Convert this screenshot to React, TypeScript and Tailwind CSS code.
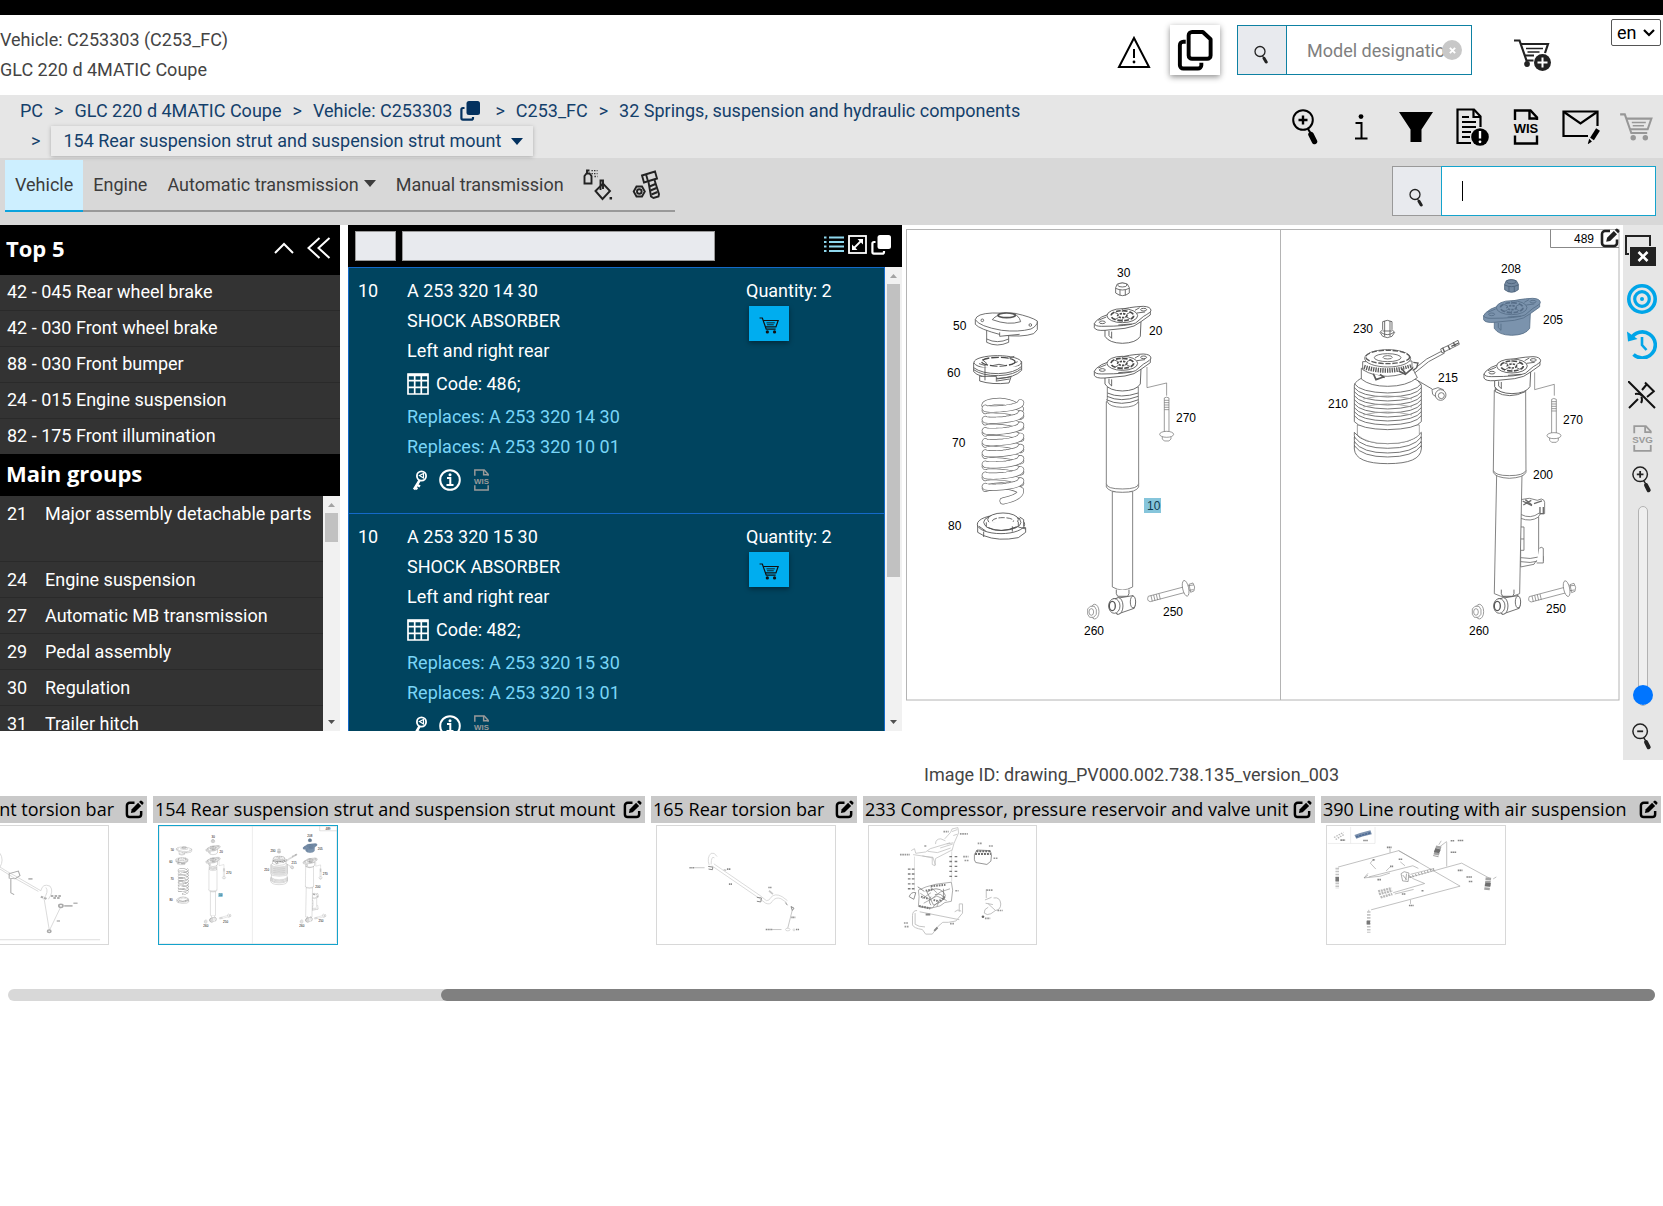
import React from "react";

type IconProps = { className?: string };

const HEADER_TEXT = "font-['Roboto',sans-serif] text-[18px] leading-[30px]";

/* ---------- icons ---------- */

function CartIcon({ className }: IconProps) {
  return (
    <svg viewBox="0 0 36 30" className={className} fill="none" stroke="currentColor" strokeWidth="2.2">
      <path d="M1 1.5h5l7 20h17" />
      <path d="M7.500 6H34.500L30.500 17.500H11.500" />
      <path d="M13.500 10.200h15M14.500 13.700h12" strokeWidth="1.600" />
      <circle cx="15" cy="26.500" r="2.900" fill="currentColor" stroke="none" />
      <circle cx="28" cy="26.500" r="2.900" fill="currentColor" stroke="none" />
    </svg>
  );
}

function CartPlusIcon({ className }: IconProps) {
  return (
    <svg viewBox="0 0 38 32" className={className} fill="none" stroke="#222" strokeWidth="2.200">
      <path d="M0 1.500h5.500l7 20h7" />
      <path d="M6.500 5H34L31 14M11 16.500h9" />
      <path d="M12 9.500h17M13.500 13h12" strokeWidth="1.600" />
      <circle cx="13" cy="25" r="2.900" fill="#222" stroke="none" />
      <circle cx="28.500" cy="23.500" r="8.500" fill="#222" stroke="none" />
      <path d="M28.500 18.500v10M23.500 23.500h10" stroke="#fff" strokeWidth="2" />
    </svg>
  );
}

function MagnifierIcon({ className, sign }: IconProps & { sign?: "plus" | "minus" }) {
  return (
    <svg viewBox="0 0 27 36" className={className} fill="none" stroke="currentColor">
      <circle cx="11" cy="11" r="9.800" strokeWidth="2" />
      {sign && <path d={sign === "plus" ? "M11 6.500v9M6.500 11h9" : "M7 11h8"} strokeWidth="2.400" />}
      <path d="M16 20l2.500 4" strokeWidth="2" />
      <path d="M19 25.500l3.500 7" strokeWidth="5.500" strokeLinecap="round" />
    </svg>
  );
}

function SmallSearchIcon({ className }: IconProps) {
  return (
    <svg viewBox="0 0 14 19" className={className} fill="none" stroke="#222">
      <circle cx="6" cy="6.500" r="5" strokeWidth="1.300" />
      <path d="M8.500 11l1.500 2" strokeWidth="1.200" />
      <path d="M10 13.200l2.200 3.800" strokeWidth="3" strokeLinecap="round" />
    </svg>
  );
}

function CloneIcon({ className }: IconProps) {
  return (
    <svg viewBox="0 0 20 20" className={className}>
      <rect x="6.500" y="0" width="13.500" height="14" rx="2.500" fill="currentColor" />
      <path d="M4.500 7H3a1.600 1.600 0 0 0-1.600 1.600v8.300A1.700 1.700 0 0 0 3 18.600h8.300a1.700 1.700 0 0 0 1.700-1.700v-1" fill="none" stroke="currentColor" strokeWidth="2.200" />
    </svg>
  );
}

function CopyIcon({ className }: IconProps) {
  return (
    <svg viewBox="0 0 36 42" className={className} fill="none" stroke="#000" strokeWidth="4" strokeLinejoin="round">
      <path d="M15 2h11l8 7.500V26a3.500 3.500 0 0 1-3.500 3.500H15A3.500 3.500 0 0 1 11.500 26V5.500A3.500 3.500 0 0 1 15 2z" />
      <path d="M8.500 12H6a3.500 3.500 0 0 0-3.500 3.500V36A3.500 3.500 0 0 0 6 39.500h15a3.500 3.500 0 0 0 3.500-3.500v-2.500" />
    </svg>
  );
}

function EditIcon({ className }: IconProps) {
  return (
    <svg viewBox="0 0 20 20" className={className} fill="none" stroke="currentColor">
      <path d="M10 3H5a3 3 0 0 0-3 3v9a3 3 0 0 0 3 3h9a3 3 0 0 0 3-3v-3.500" strokeWidth="2.600" />
      <path d="M6.200 13.800l.9-4L13.800 3l3.200 3.200-6.800 6.700z" fill="currentColor" stroke="none" />
      <path d="M14.800 2l1-1a1.400 1.400 0 0 1 2 0l1.200 1.200a1.400 1.400 0 0 1 0 2l-1 1z" fill="currentColor" stroke="none" />
    </svg>
  );
}

function WordDocIcon({ className, label }: IconProps & { label: string }) {
  return (
    <svg viewBox="0 0 28 36" className={className} fill="none" stroke="currentColor" strokeWidth="2.400">
      <path d="M3 11V1.500h15.500L25 8.500V11" />
      <path d="M17.500 1.500v8H25" />
      <path d="M3 26.500v8h22v-8" />
      <text x="14" y="24" textAnchor="middle" fill="currentColor" stroke="none" fontFamily="Liberation Sans, sans-serif" fontWeight="700" fontSize="13">
        {label}
      </text>
    </svg>
  );
}

function WarningIcon({ className }: IconProps) {
  return (
    <svg viewBox="0 0 34 34" className={className} fill="none" stroke="#000" strokeWidth="2">
      <path d="M17 3L32 32H2z" />
      <path d="M17 14v9" />
      <circle cx="17" cy="27" r="1.400" fill="#000" stroke="none" />
    </svg>
  );
}

function InfoGlyph({ className }: IconProps) {
  return (
    <svg viewBox="0 0 14 26" className={className} fill="none" stroke="currentColor" strokeWidth="2">
      <circle cx="7" cy="2.600" r="2.400" fill="currentColor" stroke="none" />
      <path d="M1.500 9H7.500V24M1 24.500h12.500" />
    </svg>
  );
}

function FunnelIcon({ className }: IconProps) {
  return (
    <svg viewBox="0 0 34 30" className={className}>
      <path d="M0 0h34L22.500 17.500V30h-11V17.500z" fill="#000" />
    </svg>
  );
}

function NoteAlertIcon({ className }: IconProps) {
  return (
    <svg viewBox="0 0 34 38" className={className} fill="none" stroke="#000" strokeWidth="2.200">
      <path d="M15 35H1.500V1.500H18L24.500 8.500V19" />
      <path d="M17.500 1.500V9h7" />
      <path d="M6 9h7M6 14h14M6 19h14M6 24h9M6 29h8" strokeWidth="2" />
      <circle cx="24" cy="29" r="8.800" fill="#000" stroke="none" />
      <path d="M24 23v7.500" stroke="#fff" strokeWidth="2.400" />
      <circle cx="24" cy="33.800" r="1.400" fill="#fff" stroke="none" />
    </svg>
  );
}

function MailPenIcon({ className }: IconProps) {
  return (
    <svg viewBox="0 0 38 34" className={className} fill="none" stroke="#000" strokeWidth="2.200">
      <path d="M26 26H1.500V1.500H35.500V16" />
      <path d="M2 2l16.500 11.500L35 2" />
      <path d="M36 19.500l-6 9.500" strokeWidth="4.500" />
      <path d="M27.500 30l-.8 3 2.300-1.500z" strokeWidth="1.200" fill="#000" />
    </svg>
  );
}

function PaintIcon({ className }: IconProps) {
  return (
    <svg viewBox="0 0 30 32" className={className} fill="none" stroke="#222" strokeWidth="1.900">
      <path d="M1.500 14.500V7l2-2.500h3L8.500 7v7.500z" />
      <path d="M4 4V1.500h2.500" />
      <path d="M8.500 1.700h6M8.500 4.600h6M11.500 7.500h3" strokeDasharray="1.300 1.300" strokeWidth="1.300" />
      <path d="M12.500 22l7.500-7.500 7 7.500-7.500 8z" />
      <path d="M17.500 21V11.500H20V20" />
      <path d="M27.800 28v2.500" strokeWidth="2.500" />
    </svg>
  );
}

function BoltIcon({ className }: IconProps) {
  return (
    <svg viewBox="0 0 28 30" className={className} fill="none" stroke="#222" strokeWidth="1.900">
      <path d="M10 5.500L23 1.500l2 7L12 12.500z" />
      <path d="M14 4.300l2 7" />
      <path d="M16.500 12l2.500 14.500 2.500 1.500 5-1.500.5-2.500-4.500-14" />
      <path d="M17.500 16.500l6-2.500M18.500 20.500l6-2.500M19.500 24.500l6-2.500" />
      <path d="M4.500 16.500h5.500l2.800 5-2.800 5H4.500l-2.800-5z" />
      <circle cx="7.300" cy="21.500" r="2.300" />
    </svg>
  );
}

function CaretDown({ className }: IconProps) {
  return (
    <svg viewBox="0 0 12 7" className={className}>
      <path d="M0 0h12L6 7z" fill="currentColor" />
    </svg>
  );
}

function ListIcon({ className }: IconProps) {
  return (
    <svg viewBox="0 0 20 17" className={className} fill="none" stroke="#8fd8ee" strokeWidth="1.800">
      <path d="M5 1.500h15M5 6h15M5 10.500h15M5 15h15" />
      <path d="M0 1.500h2.500M0 6h2.500M0 10.500h2.500M0 15h2.500" />
    </svg>
  );
}

function ExpandIcon({ className }: IconProps) {
  return (
    <svg viewBox="0 0 19 19" className={className} fill="none" stroke="#fff" strokeWidth="1.800">
      <rect x="1" y="1" width="17" height="17" />
      <path d="M5.500 13.500l8-8" />
      <path d="M4 9.500V15h5.500zM9.500 4H15v5.500z" fill="#fff" stroke="none" />
    </svg>
  );
}

function GridIcon({ className }: IconProps) {
  return (
    <svg viewBox="0 0 22 22" className={className} fill="none" stroke="#fff" strokeWidth="1.700">
      <path d="M1 1h20v20H1zM1 7.700h20M1 14.300h20M7.700 1v20M14.300 1v20" />
      <path d="M1 2h20" strokeWidth="2.500" />
    </svg>
  );
}

function KeyIcon({ className }: IconProps) {
  return (
    <svg viewBox="0 0 16 21" className={className} fill="none" stroke="#fff">
      <circle cx="9.500" cy="6" r="4.600" strokeWidth="1.800" />
      <path d="M7.500 5.500l4-2v4.500z" strokeWidth="1.200" />
      <path d="M7.500 10.500L2 19.500M5.500 15l2.500 1.500M3 17.500l2.500 1.500" strokeWidth="2.500" />
    </svg>
  );
}

function InfoCircleIcon({ className }: IconProps) {
  return (
    <svg viewBox="0 0 22 22" className={className} fill="none" stroke="#fff" strokeWidth="2">
      <circle cx="11" cy="11" r="9.800" />
      <path d="M8 9h3.300v6.800M7.500 16h7" />
      <circle cx="11" cy="5.800" r="1.500" fill="#fff" stroke="none" />
    </svg>
  );
}

function ChevronUpIcon({ className }: IconProps) {
  return (
    <svg viewBox="0 0 20 12" className={className} fill="none" stroke="#fff" strokeWidth="2">
      <path d="M1 11l9-9 9 9" />
    </svg>
  );
}

function DoubleLeftIcon({ className }: IconProps) {
  return (
    <svg viewBox="0 0 24 22" className={className} fill="none" stroke="#fff" strokeWidth="2">
      <path d="M12.500 1l-11 10 11 10M22.500 1l-11 10 11 10" />
    </svg>
  );
}

function CloseWindowIcon({ className }: IconProps) {
  return (
    <svg viewBox="0 0 31 31" className={className} fill="none" stroke="#222" strokeWidth="2">
      <path d="M4 19H1V1h24v10" />
      <rect x="5" y="12" width="26" height="19" fill="#222" stroke="none" />
      <path d="M13.500 17l9 9M22.500 17l-9 9" stroke="#fff" strokeWidth="2.600" />
    </svg>
  );
}

function TargetIcon({ className }: IconProps) {
  return (
    <svg viewBox="0 0 30 30" className={className} fill="none" stroke="#00a5e8">
      <circle cx="15" cy="15" r="13.200" strokeWidth="3.600" />
      <circle cx="15" cy="15" r="7.300" strokeWidth="3.200" />
      <circle cx="15" cy="15" r="2" fill="#00a5e8" stroke="none" />
    </svg>
  );
}

function HistoryIcon({ className }: IconProps) {
  return (
    <svg viewBox="0 0 30 30" className={className} fill="none" stroke="#00a5e8">
      <path d="M4 9.500A13 13 0 1 1 6.500 25.500" strokeWidth="3.600" />
      <path d="M0 2.500L1 12.500 10.500 10z" fill="#00a5e8" stroke="none" />
      <path d="M15 8v8l4.500 5" strokeWidth="2.600" />
    </svg>
  );
}

function UnpinIcon({ className }: IconProps) {
  return (
    <svg viewBox="0 0 28 28" className={className} fill="none" stroke="#111" strokeWidth="2">
      <path d="M0 0l27 27" />
      <path d="M1 27l9-9M7 13c3-.5 5 0 7 1.500M13 22c1.500-2 1.200-4 .5-6.500M14 9l5-6M19 16l6-5M17 1.500l9.500 9.500" />
    </svg>
  );
}

/* ---------- exploded view ---------- */

const LINE = "#6b6b6b";

function Mount({ fill = "#fff", stroke = "#4a4a4a" }: { fill?: string; stroke?: string }) {
  return (
    <g fill={fill} stroke={stroke} strokeWidth="2.500">
      <path d="M600 300V334Q612 354 652 355Q694 354 706 334L708 290z" />
      <path d="M568 296V308Q572 318 600 316L660 310Q690 306 708 290L736 270V256Z" />
      <path d="M568 296Q570 288 590 276L640 256Q670 246 715 244Q737 245 738 256Q738 262 716 274L692 294Q670 304 590 304Q570 304 568 296z" />
      <ellipse cx="652" cy="272" rx="46" ry="21" />
      <ellipse cx="652" cy="272" rx="34" ry="15" strokeWidth="5" strokeDasharray="14 6" />
      <ellipse cx="652" cy="272" rx="14" ry="6" strokeWidth="5" strokeDasharray="7 3" />
      <path d="M628 262l12 5M676 262l-10 5M630 284l10-6M676 282l-10-5M652 252v9M652 282v9" />
      <ellipse cx="592" cy="292" rx="9" ry="4" />
      <ellipse cx="716" cy="254" rx="9" ry="4" />
      <path d="M612 318v14l8 8v-20M696 264l24-3M640 300l40-3M580 286l24-10M690 256l14-8" />
    </g>
  );
}

function Nut({ fill = "#fff", stroke = "#555" }: { fill?: string; stroke?: string }) {
  return (
    <g fill={fill} stroke={stroke} strokeWidth="2.500">
      <path d="M632 188l5-11q15-6 30 0l6 11v16q-20 16-41 0z" />
      <ellipse cx="652" cy="180" rx="14" ry="6" />
      <path d="M632 190q20 10 41 0M645 194v17M661 194v17" />
    </g>
  );
}

function LongBolt() {
  return (
    <g fill="#fff" stroke={LINE} strokeWidth="2">
      <path d="M778 519q6-5 14 0V622h-14z" />
      <path d="M778 526h14M778 533h14M778 540h14M778 547h14M778 554h14" />
      <path d="M772 634v8l6 6h14l6-6v-8z" />
      <ellipse cx="785" cy="628" rx="21" ry="9" />
    </g>
  );
}

function SideBolt() {
  return (
    <g fill="#fff" stroke={LINE} strokeWidth="2">
      <path d="M730 1114L836 1086 842 1102 736 1130Q724 1128 730 1114z" />
      <path d="M738 1112l4 17M746 1110l4 17M754 1108l4 17M762 1106l4 17" />
      <path d="M852 1078l12-4 5 12-2 12-10 4z" />
      <ellipse cx="842" cy="1090" rx="9" ry="24" transform="rotate(-12 842 1090)" />
      <path d="M850 1082l16-2M852 1096l14-2" />
    </g>
  );
}

function FlangeNut() {
  return (
    <g fill="#fff" stroke={LINE} strokeWidth="2">
      <ellipse cx="569" cy="1160" rx="13" ry="22" />
      <path d="M548 1152l8-8h12l6 10v14l-8 9h-12l-6-9z" />
      <ellipse cx="559" cy="1161" rx="7" ry="10" />
    </g>
  );
}

function LowerEye() {
  return (
    <g fill="#fff" stroke="#555" strokeWidth="2.500">
      <path d="M634 1094v12l4 8h30l4-8v-12" />
      <path d="M624 1122L684 1112Q696 1128 688 1150L636 1168z" />
      <ellipse cx="684" cy="1131" rx="8" ry="18" />
      <ellipse cx="640" cy="1143" rx="14" ry="25" />
      <ellipse cx="628" cy="1143" rx="17" ry="22" />
      <ellipse cx="622" cy="1143" rx="9" ry="14" strokeWidth="4" />
    </g>
  );
}

const COIL_TOP = 540;
const COIL_PITCH = 33.500;

function coilHalf(index: number, front: boolean) {
  const start = front ? 0 : Math.PI;
  const points: string[] = [];
  for (let step = 0; step <= 16; step++) {
    const t = start + (Math.PI * step) / 16;
    const x = 294 + 53 * Math.cos(t);
    const y = COIL_TOP + COIL_PITCH * (index + t / (2 * Math.PI)) + 9 * Math.sin(t);
    points.push(`${x.toFixed(1)} ${y.toFixed(1)}`);
  }
  return "M" + points.join("L");
}

function Tube({ d }: { d: string }) {
  return (
    <g fill="none" strokeLinecap="round">
      <path d={d} stroke={LINE} strokeWidth="21" />
      <path d={d} stroke="#fff" strokeWidth="17" />
    </g>
  );
}

function Spring() {
  const turns = [0, 1, 2, 3, 4, 5, 6, 7];
  return (
    <g>
      <Tube d="M240 540Q244 530 285 529Q320 530 346 552" />
      {turns.slice(0, 7).map((i) => (
        <Tube key={i} d={coilHalf(i, false)} />
      ))}
      <Tube d="M241 790Q300 772 346 796Q350 816 294 828" />
      {turns.slice(0, 8).map((i) => (
        <Tube key={i} d={coilHalf(i - 0.2, true)} />
      ))}
    </g>
  );
}

function LeftStrut() {
  return (
    <g>
      <g fill="#fff" stroke="#555" strokeWidth="2.500">
        <path d="M245 300V352Q276 368 311 352V318z" />
        <path d="M211 284V298Q222 312 290 330Q350 338 386 326L397 314V290z" />
        <path d="M211 284Q214 266 262 264L330 265Q380 276 397 288Q398 302 378 312Q340 322 290 316Q222 304 211 284z" />
        <path d="M262 284Q270 272 300 264L334 270Q346 280 347 290Q310 302 262 284z" />
        <ellipse cx="305" cy="271" rx="26" ry="7" strokeWidth="5" />
        <path d="M245 342q32 16 66 0M284 322v12l60-6" />
        <circle cx="376" cy="300" r="4" />
        <circle cx="232" cy="286" r="4" />
      </g>
      <g fill="#fff" stroke="#4a4a4a" strokeWidth="2.500">
        <path d="M224 450V468Q260 480 312 474L320 450z" />
        <path d="M206 414V440Q220 458 280 460Q330 458 350 436V410z" />
        <ellipse cx="278" cy="412" rx="71" ry="20" />
        <ellipse cx="280" cy="410" rx="50" ry="13" strokeWidth="4" strokeDasharray="22 6" />
        <path d="M206 428Q230 446 280 446Q330 444 350 424M206 434Q230 452 280 452Q330 450 350 430M240 424v42M226 454h48v16M276 462l40-6M276 468l38-6" />
        <path d="M232 404l14 12M310 400l18-6M262 422q20-8 40 0M222 416l20 6M320 418l18-8" />
      </g>
      <Spring />
      <g fill="#fff" stroke="#4a4a4a" strokeWidth="2.500">
        <path d="M218 896V922L236 932Q280 950 340 938L362 922V908z" />
        <ellipse cx="288" cy="898" rx="71" ry="28" />
        <ellipse cx="292" cy="892" rx="56" ry="24" />
        <ellipse cx="294" cy="884" rx="46" ry="20" />
        <ellipse cx="294" cy="888" rx="32" ry="10" strokeDasharray="18 5" />
        <path d="M244 892v14q40 22 96-2v-14M250 908q40 18 84-2M236 920v16M322 904v16M344 876l12 8v20M222 904l20 14M340 906l22 6" />
      </g>
      <Nut />
      <Mount />
      <g fill="#fff" stroke={LINE} strokeWidth="2.500">
        <path d="M622 800H683V1086Q652 1104 622 1086z" />
        <path d="M604 530V786Q612 802 652 802Q694 802 701 786V530z" />
        <path d="M604 776q0 16 48 16t49-16" />
        <path d="M607 486V530Q612 546 652 547Q694 546 700 530V486z" />
        <path d="M607 504q40 18 93 0M606 514q42 20 94 0M604 524q44 22 97 0" strokeWidth="3" />
      </g>
      <g transform="translate(0 143)">
        <Mount />
      </g>
      <path d="M726 426V488L785 474V512" fill="none" stroke={LINE} strokeWidth="2" />
      <LongBolt />
      <LowerEye />
      <SideBolt />
      <FlangeNut />
    </g>
  );
}

function AirSpring() {
  const upper = [476, 488, 500, 512, 524, 536, 548, 560, 572];
  const lower = [632, 646, 660, 672];
  return (
    <g fill="#fff" stroke="#5a5a5a" strokeWidth="2.500">
      <path d="M234 590V640H414V590z" />
      {lower.map((y) => (
        <path key={y} d={`M223 ${y}Q226 ${y + 44} 323 ${y + 44}Q421 ${y + 44} 424 ${y}V${y - 10}Q400 ${y + 24} 323 ${y + 24}Q246 ${y + 24} 223 ${y - 10}z`} />
      ))}
      <path d="M232 600V630Q260 656 323 656Q388 656 418 630V600z" strokeWidth="1.500" />
      <path d="M223 480V590Q240 612 323 614Q408 612 424 590V480Q416 464 396 458H250Q230 464 223 480z" />
      {upper.map((y) => (
        <path key={y} d={`M223 ${y}Q240 ${y + 26} 323 ${y + 28}Q408 ${y + 26} 424 ${y}`} fill="none" />
      ))}
      <path d="M250 522q70-18 146 0M250 546q70-18 146 0M250 570q70-18 146 0" stroke="#999" fill="none" />
      <path d="M244 430V462Q270 484 323 484Q380 484 412 458L398 430z" />
      <path d="M248 410V434Q280 454 323 454Q370 452 396 432V408z" />
      <path d="M252 426Q320 448 394 424" strokeWidth="14" strokeDasharray="4 3" fill="none" />
      <path d="M280 446l8 18 22-8M300 448l14 10M356 438l20 10 26-22M364 430l12 14" strokeWidth="5" />
      <ellipse cx="323" cy="400" rx="69" ry="26" />
      <ellipse cx="323" cy="396" rx="66" ry="20" strokeDasharray="16 5" strokeWidth="4" />
      <ellipse cx="323" cy="398" rx="40" ry="12" />
      <ellipse cx="323" cy="397" rx="14" ry="5" />
      <path d="M398 436L440 402 490 376M404 444L446 410 494 384" fill="none" />
      <path d="M482 372l22-10 30-16 4 12-32 16-20 10z" />
      <path d="M504 362l6 12M520 352l6 12M488 368l6 14M514 364l22-10" strokeWidth="4" />
      <path d="M400 412l14 2-4 14-10 8" strokeWidth="4" />
      <path d="M412 466l44 26" />
    </g>
  );
}

function Reservoir() {
  return (
    <g fill="#fff" stroke={LINE} strokeWidth="2.500">
      <path d="M722 824l26-4 24 6 12-4q10 2 10 10v34h-12l-6 8v114l14 6v14h-22l-6 10-40 8z" />
      <path d="M722 868q30 16 56-4M722 880q30 12 54-4M722 998q30 6 54-2M722 1010q30 6 54-2M722 906h10v70h-10M722 942h10" />
      <path d="M728 828l28 14M736 824l20 16M730 840l24-14M762 836l24-8M780 846v20h10v-20" strokeWidth="4" />
      <path d="M778 970q6-6 12 0v44h-20" />
    </g>
  );
}

function RightStrut() {
  return (
    <g>
      <AirSpring />
      <g fill="#fff" stroke="#555" strokeWidth="2.500">
        <path d="M300 322l8-8V290q14-8 28 0v24l8 8-8 12q-14 8-28 0z" />
        <path d="M314 288v46M330 288v46M308 318h28M302 322q20 14 40 0" />
      </g>
      <g fill="#fff" stroke="#666" strokeWidth="2.500">
        <path d="M456 494l18-6 16 6v20l-10 10-22-16z" />
        <circle cx="482" cy="510" r="16" />
        <circle cx="484" cy="512" r="9" />
      </g>
      <g transform="translate(42 -10)">
        <Nut fill="#7288a0" stroke="#4a6078" />
      </g>
      <g transform="translate(43 -24)">
        <Mount fill="#7b93ad" stroke="#566d87" />
      </g>
      <Reservoir />
      <g fill="#fff" stroke={LINE} strokeWidth="2.500">
        <path d="M650 750L643 1106Q680 1126 719 1106L726 750z" />
        <path d="M643 496L640 742Q646 758 688 760Q732 758 738 742L737 496z" />
        <path d="M640 736q4 16 48 16t50-16" />
        <path d="M646 480v20q42 24 90 0v-20M646 492q42 24 90 0" strokeWidth="3" />
      </g>
      <g transform="translate(44 151)">
        <Mount />
      </g>
      <path d="M764 442V494L823 478V512" fill="none" stroke={LINE} strokeWidth="2" />
      <g transform="translate(37 4)">
        <LongBolt />
      </g>
      <g transform="translate(30 0)">
        <LowerEye />
      </g>
      <g transform="translate(18 1)">
        <SideBolt />
      </g>
      <g transform="translate(29 0)">
        <FlangeNut />
      </g>
    </g>
  );
}

const CALLOUTS: [string, number, number][] = [
  ["30", 1117, 277],
  ["20", 1149, 335],
  ["50", 953, 330],
  ["60", 947, 377],
  ["70", 952, 447],
  ["80", 948, 530],
  ["270", 1176, 422],
  ["250", 1163, 616],
  ["260", 1084, 635],
  ["489", 1574, 243],
  ["208", 1501, 273],
  ["205", 1543, 324],
  ["230", 1353, 333],
  ["210", 1328, 408],
  ["215", 1438, 382],
  ["270", 1563, 424],
  ["200", 1533, 479],
  ["250", 1546, 613],
  ["260", 1469, 635],
];

function StrutDrawing({ className }: IconProps) {
  return (
    <svg viewBox="906 229 714 472" className={className} role="img" aria-label="Rear suspension strut exploded view">
      <g fill="none" stroke="#b4b4b4" strokeWidth="1">
        <rect x="906.500" y="229.500" width="712.500" height="470.500" />
        <path d="M1280.500 229.500V700" />
      </g>
      <path d="M1550.500 229.500V247.500H1619" fill="none" stroke="#888" />
      <g transform="translate(905 225) scale(0.3333)">
        <LeftStrut />
      </g>
      <g transform="translate(1280 225) scale(0.3333)">
        <RightStrut />
      </g>
      <rect x="1144" y="498" width="17" height="15" fill="#86c5db" />
      <g fontFamily="Liberation Sans, Arial, sans-serif" fontSize="12" fill="#000">
        {CALLOUTS.map(([label, x, y]) => (
          <text key={label + x} x={x} y={y}>
            {label}
          </text>
        ))}
        <text x="1147" y="510" fill="#0f3c50">
          10
        </text>
      </g>
    </svg>
  );
}

/* ---------- thumbnails ---------- */

function TorsionFrontThumb() {
  return (
    <svg viewBox="0 195 259 359" preserveAspectRatio="none" className="block h-full w-full" fill="none" stroke="#cfcfcf" strokeWidth="2">
      <path d="M0 278q10 20 0 42l18 14 20 14 60 44M0 326l30 24 62 44" />
      <path d="M22 340l22-8 4 14-12 10-14-2zM26 356v42l8 6" stroke="#a8a8a8" strokeWidth="2.500" />
      <path d="M98 392q4-24 22-14 10 16-4 40M110 382q8 12-6 36" />
      <path d="M98 410l16 8M122 408h24M128 414h18" stroke="#b0b0b0" strokeWidth="6" strokeDasharray="6 3" />
      <path d="M106 418l12 92M146 440l-28 74" />
      <circle cx="146" cy="438" r="5" stroke="#aaa" strokeWidth="4" />
      <circle cx="118" cy="515" r="4" stroke="#aaa" strokeWidth="4" />
      <path d="M154 438h20M176 430h10M68 356h10M136 484h8" stroke="#b8b8b8" strokeWidth="5" />
      <path d="M0 541h240" stroke="#ddd" strokeWidth="3" />
    </svg>
  );
}

function TorsionRearThumb() {
  return (
    <svg viewBox="48 195 540 359" className="block h-full w-full" fill="none" stroke="#c8c8c8" strokeWidth="2">
      <path d="M230 288q-8-14-18-10-14 12-6 36M222 292q-10-8-10 20" />
      <path d="M214 316l140 96 24 18q14 6 20-6 10-14 26-8l18 12M220 310l140 96 20 16q8 2 14-10 12-14 34-2l16 12" />
      <path d="M203 318l14 2-1 8-12-2M351 412l14 2-2 12-12-2M438 428l6 8M455 440l9 5-5 7z" stroke="#8a8a8a" strokeWidth="3" />
      <path d="M459 450l-14 56" stroke="#aaa" />
      <path d="M160 322h32M398 510h28" stroke="#aaa" />
      <path d="M146 322h14M266 372h10M386 382h10M456 473h12M378 510h20M470 510h10M260 326h12" stroke="#8a8a8a" strokeWidth="5" strokeDasharray="4 1.500" />
      <path d="M250 328l8 2M388 392l12 10" strokeWidth="5" />
      <ellipse cx="445" cy="510" rx="7" ry="4" />
      <circle cx="464" cy="511" r="3" />
    </svg>
  );
}

function CompressorThumb() {
  return (
    <svg viewBox="684 195 507 359" preserveAspectRatio="none" className="block h-full w-full" fill="none" stroke="#b4b4b4" strokeWidth="2">
      <path d="M812 270l10-6 4 14 30-4 14-10 60-18M818 282l40 6 20 2 8 24M876 290v22l8 4 2-22 50-26M886 250q0-16 16-16l14 6M914 234l18-20 4-10 18-4 2 16-14 32-6 22M936 212l16-6M940 224l12-4M862 272l30 4 40-14M846 286l30 6M920 250l20-4M900 262l38-12" />
      <path d="M822 288v104M935 272v92" stroke="#d0d0d0" />
      <path d="M818 324v66M806 324v66M932 286v66M948 286v66" stroke="#7c7c7c" strokeWidth="8" strokeDasharray="4 11" />
      <path d="M1004 282v16l4 8 34 6 12-10 2-20M1004 282l8-14 40 2 4 12" stroke="#808080" strokeWidth="2.500" />
      <path d="M1010 272h44M1006 280h48" stroke="#6a6a6a" strokeWidth="6" strokeDasharray="6 3" />
      <path d="M970 288h16M974 300h14M1014 248h14M1048 256h12M1062 293h12M910 212h16M960 219h24M778 282h30M946 392h10M1040 390h20M1074 452h16M1036 476h16M790 490h14M792 501h12M930 492h14M852 256h8" stroke="#999" strokeWidth="5" strokeDasharray="5 2" />
      <path d="M834 390l24-10 30-8 46-6 4 24-4 34-20 4-14 10-32 8-34-6 2-30zM840 400l30 20 30-24 30-10M850 430l40-22 30 14M836 440l40 4 20-20M870 380l20 18M846 416l26-18M890 440l10-24" stroke="#909090" strokeWidth="2.200" />
      <path d="M860 396q30-20 50 0t-30 40zM884 404q20-8 30 14M872 410q-10 12 0 26M910 386v34" stroke="#777" strokeWidth="2.200" />
      <path d="M836 438l34 8M900 424l14-14M872 378l44-4M842 410l20 6M880 420l16 4M856 392l20-4" stroke="#777" strokeWidth="6" strokeDasharray="5 3" />
      <path d="M832 380l20 14M806 410q6-16 20-12l-6 20z" stroke="#777" strokeWidth="2.500" />
      <path d="M830 452q-14 0-14 16v28q4 10 30 14l10 14h20l18-24 14-12q14 2 40-4l20-24v-28h-10v24M838 456l120 24M824 460v34q10 8 30 8M944 456q10-10 20-2" stroke="#c4c4c4" strokeWidth="3" />
      <path d="M882 514l10-10M856 464h14" stroke="#888" strokeWidth="6" />
      <path d="M1040 388v26M1036 420l20-8M1062 414q20-4 22 18 0 18-16 20l-22-20M1046 442q-14 6-12 18 8 8 20 2l14-10M1038 430l22 4" stroke="#a0a0a0" />
      <circle cx="1030" cy="471" r="4" fill="#666" stroke="none" />
    </svg>
  );
}

function LineRoutingThumb() {
  return (
    <svg viewBox="720 195 452 359" preserveAspectRatio="none" className="block h-full w-full" fill="none" stroke="#8c8c8c" strokeWidth="1.500">
      <path d="M722 248h120V198M780 198v50" stroke="#ddd" />
      <path d="M738 230l24-16M742 236l22-16" stroke="#bbb" strokeWidth="4" strokeDasharray="4 3" />
      <path d="M792 228l14-6 26-8" stroke="#7d92ae" strokeWidth="12" />
      <path d="M794 228l36-12" stroke="#4e6b94" strokeWidth="5" strokeDasharray="6 2" />
      <path d="M748 320L902 270 1058 378 832 450M826 450v6M902 270l50 34" />
      <path d="M824 345l-10 8 40-5 26-10M814 353l10-14M826 350l112-34 14 8M926 344l14 12 28 14-80 28M892 402l48-14" />
      <path d="M928 352L1062 308 1136 356M1024 244v74M1002 262l22-20M932 342l60-18M1142 356l8-6M1004 252l6-12" />
      <path d="M930 350l66-24" strokeWidth="7" strokeDasharray="2 6" />
      <path d="M908 340l8-6 12 4-2 26-14-2zM912 344l10 14M922 340l-2 20" strokeWidth="2" />
      <path d="M850 394l34-10M852 402l34-10M856 412l30-10" strokeWidth="7" strokeDasharray="5 2" stroke="#b8b8b8" />
      <path d="M746 322v64M826 454v66" strokeWidth="9" strokeDasharray="5 4" stroke="#c4c4c4" />
      <path d="M746 350v14M825 483v12" strokeWidth="9" stroke="#777" />
      <path d="M1004 256l-8 32M1130 352l-4 38" strokeWidth="14" strokeDasharray="8 2" stroke="#a4a4a4" />
      <path d="M1002 264l-4 12M1129 368l-1 10" strokeWidth="14" stroke="#6e6e6e" />
      <path d="M754 238h12M812 239h12M872 260h12M836 298h6M902 296h10M880 318h8M848 358h10M910 402h10M960 392h6M928 437h12M1034 240h10M1052 239h14M1034 275h14M1052 330h12M1074 350h14M1080 364h10" stroke="#888" strokeWidth="5" strokeDasharray="4 1" />
      <path d="M880 264v12M932 420v12M870 332l10-12M838 296l-8 12 14 18M906 304l12 12" />
    </svg>
  );
}

/* ---------- page parts ---------- */

function Scrollbar({ thumb }: { thumb: string }) {
  return (
    <div aria-hidden="true" className="flex w-[17px] shrink-0 flex-col items-center bg-[#f1f1f1]">
      <svg viewBox="0 0 17 17" className="h-[17px] w-[17px] shrink-0">
        <path d="M5 11h7L8.500 7z" fill="#a3a3a3" />
      </svg>
      <div className={`w-[13px] bg-[#c1c1c1] ${thumb}`} />
      <svg viewBox="0 0 17 17" className="mt-auto h-[17px] w-[17px] shrink-0">
        <path d="M5 6h7L8.500 10z" fill="#505050" />
      </svg>
    </div>
  );
}

function Header() {
  return (
    <header className="flex h-20 items-start bg-white text-[#444]">
      <div className={`pt-[10px] ${HEADER_TEXT}`}>
        <p>Vehicle: C253303 (C253_FC)</p>
        <p>GLC 220 d 4MATIC Coupe</p>
      </div>
      <div className="ml-auto flex items-start">
        <button type="button" aria-label="Warnings" className="mt-5 mr-[19px]">
          <WarningIcon className="h-[34px] w-[34px]" />
        </button>
        <button type="button" aria-label="Copy" className="mt-[10px] mr-[17px] flex h-[50px] w-[50px] items-center justify-center bg-white shadow-[0_2px_6px_rgba(0,0,0,0.45)]">
          <CopyIcon className="h-[41px] w-[36px]" />
        </button>
        <form className="relative mt-[10px] flex h-[50px] w-[235px] border border-[#0e81a3]" onSubmit={(e) => e.preventDefault()}>
          <button type="submit" aria-label="Search models" className="flex w-[49px] shrink-0 items-center justify-center border-r border-[#0e81a3] bg-[#e8eaee] pt-2 pr-[2px]">
            <SmallSearchIcon className="h-[19px] w-[14px]" />
          </button>
          <input aria-label="Model designation" placeholder="Model designation" className="min-w-0 flex-1 bg-white pr-[26px] pl-5 font-['Roboto',sans-serif] text-[18px] text-[#333] placeholder:text-[#808080] focus:outline-none" />
          <button type="button" aria-label="Clear" className="absolute top-[14px] right-[9px] flex h-5 w-5 items-center justify-center rounded-full bg-[#c8c8c8]">
            <svg viewBox="0 0 8 8" className="h-[7px] w-[7px]" stroke="#fff" strokeWidth="2.200">
              <path d="M1 1l6 6M7 1L1 7" />
            </svg>
          </button>
        </form>
        <button type="button" aria-label="Add to cart" className="mt-6 ml-[42px]">
          <CartPlusIcon className="h-[32px] w-[38px]" />
        </button>
        <div className="relative mt-1 mr-[2px] ml-[59px]">
          <select aria-label="Language" className="h-[27px] w-[50px] appearance-none rounded-[2px] border border-[#555] bg-white pl-[5px] font-['Roboto',sans-serif] text-[18px] leading-[24px] text-black">
            <option>en</option>
          </select>
          <svg viewBox="0 0 12 8" className="pointer-events-none absolute top-[10px] right-[6px] h-[8px] w-[12px]" fill="none" stroke="#000" strokeWidth="2.200">
            <path d="M1 1l5 5 5-5" />
          </svg>
        </div>
      </div>
    </header>
  );
}

function Separator() {
  return <span className="px-[11px]">&gt;</span>;
}

function Breadcrumbs() {
  return (
    <div className="flex h-[63px] items-start justify-between bg-[#e6e6e6]">
      <nav aria-label="Breadcrumb" className={`pt-px pl-5 text-[#14406b] ${HEADER_TEXT}`}>
        <div className="flex items-center">
          <a href="#pc">PC</a>
          <Separator />
          <a href="#model">GLC 220 d 4MATIC Coupe</a>
          <Separator />
          <a href="#vehicle">Vehicle: C253303</a>
          <button type="button" aria-label="Copy vehicle" className="mr-1 ml-2 text-[#03315f]">
            <CloneIcon className="h-[20px] w-[20px]" />
          </button>
          <Separator />
          <a href="#series">C253_FC</a>
          <Separator />
          <a href="#group">32 Springs, suspension and hydraulic components</a>
        </div>
        <div className="flex items-center">
          <Separator />
          <button type="button" className="flex h-[30px] items-center bg-[#eaeaea] pr-[10px] pl-3 shadow-[0_1px_4px_rgba(0,0,0,0.25)]">
            154 Rear suspension strut and suspension strut mount
            <CaretDown className="ml-[10px] h-[7px] w-[12px] text-[#03315f]" />
          </button>
        </div>
      </nav>
      <div className="flex self-center text-black [&>button]:flex [&>button]:h-[40px] [&>button]:w-[55px] [&>button]:items-center [&>button]:justify-center">
        <button type="button" aria-label="Zoom search"><MagnifierIcon sign="plus" className="h-[36px] w-[27px]" /></button>
        <button type="button" aria-label="Information"><InfoGlyph className="h-[26px] w-[14px]" /></button>
        <button type="button" aria-label="Filter"><FunnelIcon className="h-[30px] w-[34px]" /></button>
        <button type="button" aria-label="Notes" className="pl-1"><NoteAlertIcon className="h-[38px] w-[34px]" /></button>
        <button type="button" aria-label="WIS"><WordDocIcon label="WIS" className="h-[36px] w-[28px]" /></button>
        <button type="button" aria-label="Feedback"><MailPenIcon className="h-[34px] w-[38px]" /></button>
        <button type="button" aria-label="Cart" className="text-[#979797]"><CartIcon className="h-[28px] w-[34px]" /></button>
      </div>
    </div>
  );
}

function TabBar() {
  return (
    <div className="flex h-[67px] items-start justify-between bg-[#d8d8d8]">
      <div role="tablist" className={`mt-[2px] ml-[5px] flex h-[52px] border-b-2 border-[#999] text-[#3c3c3c] ${HEADER_TEXT}`}>
        <button type="button" role="tab" aria-selected="true" className="-mb-[2px] border-b-2 border-[#0ba3dd] bg-[#cdefff] px-[10px]">Vehicle</button>
        <button type="button" role="tab" className="px-[10px]">Engine</button>
        <button type="button" role="tab" className="flex items-center px-[10px]">
          Automatic transmission
          <CaretDown className="mb-1 ml-[5px] h-[7px] w-[12px]" />
        </button>
        <button type="button" role="tab" className="px-[10px]">Manual transmission</button>
        <button type="button" role="tab" aria-label="Operating fluids" className="px-[9px]"><PaintIcon className="h-[32px] w-[30px]" /></button>
        <button type="button" role="tab" aria-label="Standard parts" className="pr-[15px] pl-[10px]"><BoltIcon className="h-[30px] w-[28px]" /></button>
      </div>
      <form className="mt-2 mr-[7px] flex h-[50px] w-[264px]" onSubmit={(e) => e.preventDefault()}>
        <button type="submit" aria-label="Search parts" className="flex w-[49px] shrink-0 items-center justify-center border border-r-0 border-[#999] bg-[#e8eaee] pt-3 pr-[2px]">
          <SmallSearchIcon className="h-[19px] w-[14px]" />
        </button>
        <div className="flex min-w-0 flex-1 items-center border border-[#14a3cc] bg-white pl-5">
          <span className="h-[20px] w-px shrink-0 bg-black" />
          <input aria-label="Part search" className="w-full min-w-0 bg-transparent focus:outline-none" />
        </div>
      </form>
    </div>
  );
}

const TOP_FIVE = [
  "42 - 045 Rear wheel brake",
  "42 - 030 Front wheel brake",
  "88 - 030 Front bumper",
  "24 - 015 Engine suspension",
  "82 - 175 Front illumination",
];

const MAIN_GROUPS: [string, string, string][] = [
  ["21", "Major assembly detachable parts", "h-[66px]"],
  ["24", "Engine suspension", "h-[36px]"],
  ["27", "Automatic MB transmission", "h-[36px]"],
  ["29", "Pedal assembly", "h-[36px]"],
  ["30", "Regulation", "h-[36px]"],
  ["31", "Trailer hitch", "h-[36px]"],
];

function Sidebar() {
  return (
    <aside className="flex h-[506px] w-[340px] shrink-0 flex-col bg-[#333] font-['Roboto',sans-serif] text-[18px] leading-[34px] text-white">
      <div className="flex h-[50px] shrink-0 items-center bg-black pr-[9px] pb-1 pl-[6px]">
        <h2 className="mr-auto font-['Open_Sans',sans-serif] text-[22px] font-bold">Top 5</h2>
        <button type="button" aria-label="Collapse list" className="mr-[13px]"><ChevronUpIcon className="h-[12px] w-[20px]" /></button>
        <button type="button" aria-label="Collapse sidebar"><DoubleLeftIcon className="h-[22px] w-[24px]" /></button>
      </div>
      <ul className="shrink-0">
        {TOP_FIVE.map((item) => (
          <li key={item} className="h-[36px] border-b border-[#2a2a2a] pl-[7px] last:h-[35px] last:border-b-0">
            <a href="#top">{item}</a>
          </li>
        ))}
      </ul>
      <h2 className="flex h-[42px] shrink-0 items-center bg-black pb-1 pl-[6px] font-['Open_Sans',sans-serif] text-[22px] font-bold">Main groups</h2>
      <div className="flex min-h-0 flex-1">
        <ul className="min-w-0 flex-1 overflow-hidden leading-[36px]">
          {MAIN_GROUPS.map(([num, name, height]) => (
            <li key={num} className={`border-b border-[#2a2a2a] pl-[7px] ${height}`}>
              <a href="#group" className="flex">
                <span className="w-[38px] shrink-0">{num}</span>
                <span className="whitespace-nowrap">{name}</span>
              </a>
            </li>
          ))}
        </ul>
        <Scrollbar thumb="h-[29px]" />
      </div>
    </aside>
  );
}

const PARTS = [
  { id: "a", number: "A 253 320 14 30", code: "Code: 486;", replaces: ["A 253 320 14 30", "A 253 320 10 01"] },
  { id: "b", number: "A 253 320 15 30", code: "Code: 482;", replaces: ["A 253 320 15 30", "A 253 320 13 01"] },
];

function PartsPanel() {
  return (
    <section aria-label="Parts" className="ml-2 flex h-[506px] w-[554px] shrink-0 flex-col">
      <div className="flex h-[42px] shrink-0 items-start bg-black pt-[6px] pr-[11px] pl-[7px]">
        <input aria-label="Item filter" className="h-[30px] w-[41px] border border-[#999] bg-[#e8eaee]" />
        <input aria-label="Part filter" className="mr-auto ml-[6px] h-[30px] w-[313px] border border-[#999] bg-[#e8eaee]" />
        <div className="mt-1 flex items-start gap-1">
          <button type="button" aria-label="List view"><ListIcon className="mt-px h-[17px] w-[20px]" /></button>
          <button type="button" aria-label="Expand"><ExpandIcon className="h-[19px] w-[19px]" /></button>
          <button type="button" aria-label="Copy parts" className="text-white"><CloneIcon className="h-[20px] w-[20px]" /></button>
        </div>
      </div>
      <div className="flex min-h-0 flex-1">
        <ul className="min-w-0 flex-1 overflow-hidden border-r border-[#1469c8] bg-[#00445f] font-['Roboto',sans-serif] text-[18px] leading-[30px] text-white">
          {PARTS.map((part) => (
            <li key={part.id} className="flex h-[246px] border-t border-l border-[#1469c8] pt-2 pl-[9px]">
              <span className="w-[49px] shrink-0">10</span>
              <div className="flex-1">
                <p>{part.number}</p>
                <p>SHOCK ABSORBER</p>
                <p>Left and right rear</p>
                <p className="flex h-[36px] items-center gap-[7px]">
                  <GridIcon className="h-[22px] w-[22px]" />
                  {part.code}
                </p>
                {part.replaces.map((r) => (
                  <p key={r}>
                    <a href="#replaces" className="text-[#79d5f7]">Replaces: {r}</a>
                  </p>
                ))}
                <div className="flex h-[36px] items-center">
                  <button type="button" aria-label="Key" className="ml-[5px]"><KeyIcon className="h-[21px] w-[16px]" /></button>
                  <button type="button" aria-label="Part information" className="ml-[11px]"><InfoCircleIcon className="h-[22px] w-[22px]" /></button>
                  <button type="button" aria-label="Part WIS" className="ml-[12px] text-[#9a9a9a]"><WordDocIcon label="WIS" className="h-[22px] w-[17px]" /></button>
                </div>
              </div>
              <div className="w-[138px] shrink-0">
                <p>Quantity: 2</p>
                <button type="button" aria-label="Add part to cart" className="ml-[3px] flex h-[35px] w-[40px] items-center justify-center bg-[#00adef] pt-1 text-[#111] shadow-[0_2px_5px_rgba(0,0,0,0.4)]">
                  <CartIcon className="h-[17px] w-[20px]" />
                </button>
              </div>
            </li>
          ))}
        </ul>
        <Scrollbar thumb="h-[293px]" />
      </div>
    </section>
  );
}

function DrawingTools() {
  return (
    <div className="flex h-[535px] w-10 shrink-0 flex-col items-center bg-[#e6e6e6] pr-[2px] text-[#222]">
      <button type="button" aria-label="Close window" className="mt-[10px] mr-[3px]"><CloseWindowIcon className="h-[31px] w-[31px]" /></button>
      <button type="button" aria-label="Highlight" className="mt-[18px]"><TargetIcon className="h-[30px] w-[30px]" /></button>
      <button type="button" aria-label="History" className="mt-[15px]"><HistoryIcon className="h-[30px] w-[30px]" /></button>
      <button type="button" aria-label="Unpin" className="mt-[22px]"><UnpinIcon className="h-[28px] w-[28px]" /></button>
      <button type="button" aria-label="Save SVG" className="mt-[16px] text-[#9a9a9a]"><WordDocIcon label="SVG" className="h-[27px] w-[21px]" /></button>
      <button type="button" aria-label="Zoom in" className="mt-[14px]"><MagnifierIcon sign="plus" className="h-[27px] w-[20px]" /></button>
      <input
        type="range"
        aria-label="Zoom level"
        min={0}
        max={100}
        defaultValue={0}
        className="mt-[13px] ml-[2px] h-[200px] w-[20px] shrink-0 appearance-none bg-transparent [direction:rtl] [writing-mode:vertical-lr] [&::-webkit-slider-runnable-track]:mr-[5px] [&::-webkit-slider-runnable-track]:ml-[5px] [&::-webkit-slider-runnable-track]:w-[10px] [&::-webkit-slider-runnable-track]:rounded-full [&::-webkit-slider-runnable-track]:border [&::-webkit-slider-runnable-track]:border-[#b2b2b2] [&::-webkit-slider-runnable-track]:bg-[#efefef] [&::-webkit-slider-thumb]:-ml-[6px] [&::-webkit-slider-thumb]:h-[20px] [&::-webkit-slider-thumb]:w-[20px] [&::-webkit-slider-thumb]:appearance-none [&::-webkit-slider-thumb]:rounded-full [&::-webkit-slider-thumb]:bg-[#0075ff]"
      />
      <button type="button" aria-label="Zoom out" className="mt-[17px]"><MagnifierIcon sign="minus" className="h-[27px] w-[20px]" /></button>
    </div>
  );
}

function ThumbCard({ title, width, thumbWidth, active, children }: { title: string; width: string; thumbWidth: string; active?: boolean; children: React.ReactNode }) {
  return (
    <div className={`shrink-0 ${width}`}>
      <div className="flex h-[27px] items-center justify-between bg-[#c9c9c9] pr-[3px] pl-[2px]">
        <span className="font-['Open_Sans',sans-serif] text-[18px] leading-[27px] whitespace-nowrap text-black">{title}</span>
        <button type="button" aria-label={`Edit ${title}`} className="shrink-0"><EditIcon className="h-[19px] w-[19px]" /></button>
      </div>
      <button type="button" aria-label={title} className={`mt-[2px] ml-[5px] block h-[120px] border ${thumbWidth} ${active ? "border-[#14a3cc]" : "border-[#d8d8d8]"}`}>
        {children}
      </button>
    </div>
  );
}

export default function App() {
  return (
    <div className="min-h-screen overflow-hidden bg-white">
      <div className="h-[15px] bg-black" />
      <Header />
      <Breadcrumbs />
      <TabBar />
      <main>
        <div className="flex items-start">
          <Sidebar />
          <PartsPanel />
          <div className="relative ml-1 min-w-0 flex-1 pt-1 pr-[3px]">
            <StrutDrawing className="block w-full" />
            <button type="button" aria-label="Edit drawing" className="absolute top-[3px] right-[3px] text-[#222]">
              <EditIcon className="h-[20px] w-[20px]" />
            </button>
          </div>
          <DrawingTools />
        </div>
        <p className={`h-[36px] pl-[924px] text-[#444] ${HEADER_TEXT}`}>Image ID: drawing_PV000.002.738.135_version_003</p>
        <div className="flex gap-[6px] overflow-hidden">
          <div className="w-[147px] shrink-0 overflow-hidden">
            <div className="flex h-[27px] items-center justify-end bg-[#c9c9c9] pr-[3px]">
              <span className="font-['Open_Sans',sans-serif] text-[18px] leading-[27px] whitespace-nowrap text-black">nt torsion bar</span>
              <button type="button" aria-label="Edit front torsion bar" className="ml-[11px] shrink-0"><EditIcon className="h-[19px] w-[19px]" /></button>
            </div>
            <button type="button" aria-label="Front torsion bar" className="mt-[2px] block h-[120px] w-[109px] border border-l-0 border-[#d8d8d8]">
              <TorsionFrontThumb />
            </button>
          </div>
          <ThumbCard title="154 Rear suspension strut and suspension strut mount" width="w-[492px]" thumbWidth="w-[180px]" active>
            <StrutDrawing className="block h-full w-full" />
          </ThumbCard>
          <ThumbCard title="165 Rear torsion bar" width="w-[206px]" thumbWidth="w-[180px]">
            <TorsionRearThumb />
          </ThumbCard>
          <ThumbCard title="233 Compressor, pressure reservoir and valve unit" width="w-[452px]" thumbWidth="w-[169px]">
            <CompressorThumb />
          </ThumbCard>
          <ThumbCard title="390 Line routing with air suspension" width="w-[340px]" thumbWidth="w-[180px]">
            <LineRoutingThumb />
          </ThumbCard>
        </div>
        <div aria-hidden="true" className="mt-[44px] mr-2 ml-2 flex h-[12px] justify-end rounded-full bg-[#d8d8d8]">
          <div className="w-[73.7%] rounded-full bg-[#808080]" />
        </div>
      </main>
    </div>
  );
}
